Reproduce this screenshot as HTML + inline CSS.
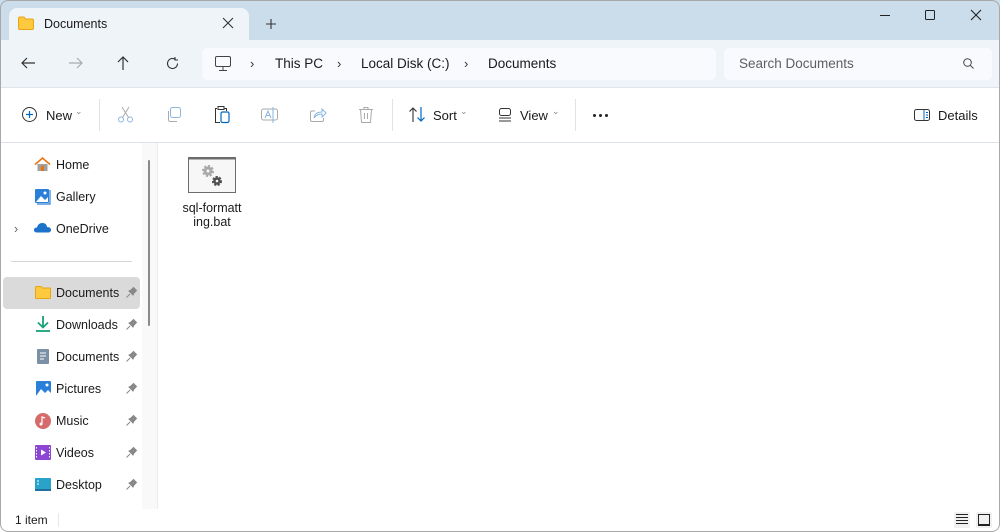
<!DOCTYPE html>
<html><head><style>
*{margin:0;padding:0;box-sizing:border-box}
body{width:1000px;height:532px;overflow:hidden;background:#fff;font-family:"Liberation Sans",sans-serif;font-size:12.5px;color:#1a1a1a;position:relative}
.a{position:absolute}
.frame{position:absolute;inset:0;border:1px solid #a8a8a8;border-radius:8px;pointer-events:none}
.t{position:absolute;white-space:nowrap}
.s{margin-top:1px}
svg{position:absolute;overflow:visible}
</style></head><body>
<div class="a" style="left:0;top:0;width:1000px;height:40px;background:#cbdcea"></div>
<div class="a" style="left:9px;top:8px;width:240px;height:34px;background:#eff4f9;border-radius:8px 8px 0 0"></div>
<div class="a" style="left:0;top:40px;width:1000px;height:48px;background:#eff4f9;border-bottom:1px solid #dfe5ea"></div>
<svg style="left:18px;top:16px" width="16" height="14"><path d="M0.5 2.5 Q0.5 1 2 1 H6 L7.5 3 H14 Q15.5 3 15.5 4.5 V12 Q15.5 13.5 14 13.5 H2 Q0.5 13.5 0.5 12 Z" fill="#fcc93f" stroke="#e9a412"/></svg>
<div class="t" style="left:44px;top:17px;font-size:12.5px">Documents</div>
<svg style="left:223px;top:18px" width="10" height="10"><path d="M0 0L10 10M10 0L0 10" stroke="#333" stroke-width="1.1"/></svg>
<svg style="left:266px;top:19px" width="10" height="10"><path d="M5 0V10M0 5H10" stroke="#333" stroke-width="1.1"/></svg>
<svg style="left:880px;top:15px" width="10" height="1"><path d="M0 0.5H10" stroke="#222"/></svg>
<svg style="left:925px;top:10px" width="10" height="10"><rect x="0.5" y="0.5" width="9" height="9" rx="1" fill="none" stroke="#222"/></svg>
<svg style="left:971px;top:10px" width="10" height="10"><path d="M0 0L10 10M10 0L0 10" stroke="#222" stroke-width="1.1"/></svg>
<svg style="left:21px;top:57px" width="14" height="12"><path d="M14 6H1M6 1L1 6L6 11" fill="none" stroke="#333" stroke-width="1.2"/></svg>
<svg style="left:69px;top:57px" width="14" height="12"><path d="M0 6H13M8 1L13 6L8 11" fill="none" stroke="#aaa" stroke-width="1.2"/></svg>
<svg style="left:117px;top:56px" width="12" height="14"><path d="M6 14V1M1 6L6 1L11 6" fill="none" stroke="#333" stroke-width="1.2"/></svg>
<svg style="left:166px;top:57px" width="13" height="13"><path d="M11.5 6.5A5 5 0 1 1 9.5 2.5M9 0V3H12" fill="none" stroke="#333" stroke-width="1.1"/></svg>
<div class="a" style="left:202px;top:48px;width:514px;height:32px;background:#f8fafd;border-radius:5px"></div>
<svg style="left:215px;top:56px" width="16" height="15"><rect x="0.5" y="0.5" width="15" height="10" rx="1.5" fill="none" stroke="#444"/><path d="M8 11V14M4 14.5H12" stroke="#444"/></svg>
<div class="t" style="left:250px;top:56px;font-size:13px;color:#333">›</div>
<div class="t" style="left:275px;top:56px;font-size:13.5px">This PC</div>
<div class="t" style="left:337px;top:56px;font-size:13px;color:#333">›</div>
<div class="t" style="left:361px;top:56px;font-size:13.5px">Local Disk (C:)</div>
<div class="t" style="left:464px;top:56px;font-size:13px;color:#333">›</div>
<div class="t" style="left:488px;top:56px;font-size:13.5px">Documents</div>
<div class="a" style="left:724px;top:48px;width:268px;height:32px;background:#f8fafd;border-radius:5px"></div>
<div class="t" style="left:739px;top:56px;font-size:13.5px;color:#5f5f5f">Search Documents</div>
<svg style="left:963px;top:58px" width="11" height="11"><circle cx="4.5" cy="4.5" r="3.8" fill="none" stroke="#444"/><path d="M7.3 7.3L10.5 10.5" stroke="#444"/></svg>
<div class="a" style="left:0;top:142px;width:1000px;height:1px;background:#dde3e8"></div>
<svg style="left:22px;top:107px" width="15" height="15"><circle cx="7.5" cy="7.5" r="7" fill="none" stroke="#333"/><path d="M7.5 4V11M4 7.5H11" stroke="#0067c0" stroke-width="1.2"/></svg>
<div class="t" style="left:46px;top:108px;font-size:13px">New</div>
<div class="t" style="left:75px;top:106px;font-size:9px;color:#888">⌄</div>
<div class="a" style="left:99px;top:99px;width:1px;height:32px;background:#e3e3e3"></div>
<svg style="left:118px;top:107px" width="15" height="16"><circle cx="3" cy="12.5" r="2.5" fill="none" stroke="#8ab6e2"/><circle cx="12" cy="12.5" r="2.5" fill="none" stroke="#8ab6e2"/><path d="M4.5 10.5L11 0M10.5 10.5L4 0" stroke="#aaa"/></svg>
<svg style="left:166px;top:107px" width="15" height="15"><rect x="4.5" y="0.5" width="10" height="10" rx="2" fill="none" stroke="#8ab6e2"/><path d="M2.5 4V12.5Q2.5 14.5 4.5 14.5H11" fill="none" stroke="#aaa"/></svg>
<svg style="left:214px;top:106px" width="16" height="17"><path d="M3 2.5H1.5V16.5H6" fill="none" stroke="#333"/><rect x="4" y="0.5" width="6" height="3" fill="none" stroke="#333"/><path d="M10 2.5H12.5V5" fill="none" stroke="#333"/><rect x="7" y="6" width="8" height="10.5" rx="1.5" fill="none" stroke="#0067c0" stroke-width="1.2"/></svg>
<svg style="left:261px;top:107px" width="17" height="16"><rect x="0.5" y="2" width="16" height="11" rx="2" fill="none" stroke="#aaa"/><path d="M4 11L7 4L10 11M5 8.5H9" fill="none" stroke="#8ab6e2"/><path d="M12 0V16" stroke="#8ab6e2"/></svg>
<svg style="left:310px;top:107px" width="16" height="15"><path d="M5 4H2Q0.5 4 0.5 5.5V13Q0.5 14.5 2 14.5H12Q13.5 14.5 13.5 13V11" fill="none" stroke="#aaa"/><path d="M4 11Q5 5 12 5V2L16 6L12 10V7Q7 7 4 11Z" fill="none" stroke="#8ab6e2"/></svg>
<svg style="left:359px;top:107px" width="14" height="16"><path d="M0 2.5H14M5 2.5V0.5H9V2.5M1.5 2.5L2.5 15.5H11.5L12.5 2.5M5.5 6V12M8.5 6V12" fill="none" stroke="#aaa"/></svg>
<div class="a" style="left:392px;top:99px;width:1px;height:32px;background:#e3e3e3"></div>
<svg style="left:409px;top:107px" width="16" height="15"><path d="M4 15V1M0.5 4.5L4 1L7.5 4.5" fill="none" stroke="#333" stroke-width="1.1"/><path d="M12 0V14M8.5 10.5L12 14L15.5 10.5" fill="none" stroke="#0067c0" stroke-width="1.2"/></svg>
<div class="t" style="left:433px;top:108px;font-size:13px">Sort</div>
<div class="t" style="left:460px;top:106px;font-size:9px;color:#888">⌄</div>
<svg style="left:499px;top:108px" width="12" height="14"><rect x="0.5" y="0.5" width="11" height="7" rx="2" fill="none" stroke="#333"/><path d="M0 10H12M0 13H12" stroke="#333"/></svg>
<div class="t" style="left:520px;top:108px;font-size:13px">View</div>
<div class="t" style="left:552px;top:106px;font-size:9px;color:#888">⌄</div>
<div class="a" style="left:575px;top:99px;width:1px;height:32px;background:#e3e3e3"></div>
<div class="a" style="left:593px;top:114px;width:3px;height:3px;background:#222;border-radius:50%"></div>
<div class="a" style="left:599px;top:114px;width:3px;height:3px;background:#222;border-radius:50%"></div>
<div class="a" style="left:605px;top:114px;width:3px;height:3px;background:#222;border-radius:50%"></div>
<svg style="left:914px;top:109px" width="16" height="12"><rect x="0.5" y="0.5" width="15" height="11" rx="2" fill="none" stroke="#333"/><path d="M10 0.5V11.5" stroke="#0067c0"/><path d="M12 3.5H14M12 6H14M12 8.5H14" stroke="#0067c0"/></svg>
<div class="t" style="left:938px;top:108px;font-size:13px">Details</div>
<div class="a" style="left:142px;top:143px;width:15px;height:366px;background:#f9f9f9"></div>
<div class="a" style="left:148px;top:160px;width:2px;height:166px;background:#8a8a8a;border-radius:1px"></div>
<div class="a" style="left:157px;top:143px;width:1px;height:366px;background:#ececec"></div>
<svg style="left:34px;top:157px" width="17" height="15"><path d="M1 7.5L8.5 1L16 7.5" fill="none" stroke="#e8750f" stroke-width="1.6"/><path d="M3.5 7V14H13.5V7" fill="#a0a0a0"/><rect x="7" y="9" width="3" height="5" fill="#e8750f"/></svg>
<div class="t s" style="left:56px;top:157px">Home</div>
<svg style="left:35px;top:188px" width="16" height="16"><rect x="0" y="1" width="14" height="14" rx="1" fill="#2a7fd8"/><path d="M1 14L6 8L10 12L13 9V14Z" fill="#fff"/><circle cx="10" cy="5" r="1.5" fill="#fff"/><path d="M15 2V16H2" fill="none" stroke="#2a7fd8" stroke-width="1.2"/></svg>
<div class="t s" style="left:56px;top:189px">Gallery</div>
<div class="t s" style="left:14px;top:221px;color:#666">›</div>
<svg style="left:34px;top:222px" width="17" height="11"><path d="M3 10.5Q0 10.5 0 8Q0 5.5 3 5.5Q4 1 8.5 1Q12.5 1 13 5Q17 5 17 8Q17 10.5 14 10.5Z" fill="#1d72c9"/></svg>
<div class="t s" style="left:56px;top:221px">OneDrive</div>
<div class="a" style="left:11px;top:261px;width:121px;height:1px;background:#d8d8d8"></div>
<div class="a" style="left:3px;top:277px;width:137px;height:32px;background:#dadada;border-radius:4px"></div>
<svg style="left:35px;top:286px" width="16" height="13"><path d="M0.5 1.5Q0.5 0.5 1.5 0.5H6L7.5 2H15Q15.5 2 15.5 3V12Q15.5 12.5 15 12.5H1Q0.5 12.5 0.5 12Z" fill="#fcc93f" stroke="#e9a412"/></svg>
<div class="t s" style="left:56px;top:285px">Documents</div>
<div class="t s" style="left:56px;top:317px">Downloads</div>
<svg style="left:36px;top:316px" width="14" height="16"><path d="M7 0V11M2 6.5L7 11.5L12 6.5" fill="none" stroke="#1aa179" stroke-width="1.8"/><path d="M0 15H14" stroke="#1aa179" stroke-width="1.8"/></svg>
<svg style="left:37px;top:349px" width="12" height="15"><rect width="12" height="15" rx="1" fill="#7b8fa6"/><path d="M3 4H9M3 7H9M3 10H7" stroke="#fff"/></svg>
<div class="t s" style="left:56px;top:349px">Documents</div>
<svg style="left:36px;top:381px" width="15" height="15"><rect width="15" height="15" rx="1" fill="#2a7fd8"/><path d="M0 15L5 8L9 12L12 9L15 12V15Z" fill="#fff"/><circle cx="11" cy="4" r="1.5" fill="#fff"/></svg>
<div class="t s" style="left:56px;top:381px">Pictures</div>
<svg style="left:35px;top:413px" width="16" height="16"><circle cx="8" cy="8" r="8" fill="#d66b6b"/><path d="M7 11V4L10 5" fill="none" stroke="#fff" stroke-width="1.2"/><circle cx="6" cy="11" r="1.5" fill="#fff"/></svg>
<div class="t s" style="left:56px;top:413px">Music</div>
<svg style="left:35px;top:445px" width="16" height="15"><rect width="16" height="15" rx="1" fill="#8d46d4"/><path d="M6 4.5L11 7.5L6 10.5Z" fill="#fff"/><path d="M1.5 2V13M14.5 2V13" stroke="#fff" stroke-dasharray="1.5 1.5"/></svg>
<div class="t s" style="left:56px;top:445px">Videos</div>
<svg style="left:35px;top:478px" width="16" height="13"><rect width="16" height="12" rx="1" fill="#29a3c9"/><rect x="0" y="11" width="16" height="2" fill="#1e6f9c"/><path d="M2 3H4M2 6H4" stroke="#fff"/></svg>
<div class="t s" style="left:56px;top:477px">Desktop</div>
<svg style="left:126px;top:287px" width="11" height="11"><path d="M0.5 10.5L4 7M3 4L7 8L8 6L10.5 3.5L7.5 0.5L5 3Z" fill="#888" stroke="#888"/></svg>
<svg style="left:126px;top:319px" width="11" height="11"><path d="M0.5 10.5L4 7M3 4L7 8L8 6L10.5 3.5L7.5 0.5L5 3Z" fill="#888" stroke="#888"/></svg>
<svg style="left:126px;top:351px" width="11" height="11"><path d="M0.5 10.5L4 7M3 4L7 8L8 6L10.5 3.5L7.5 0.5L5 3Z" fill="#888" stroke="#888"/></svg>
<svg style="left:126px;top:383px" width="11" height="11"><path d="M0.5 10.5L4 7M3 4L7 8L8 6L10.5 3.5L7.5 0.5L5 3Z" fill="#888" stroke="#888"/></svg>
<svg style="left:126px;top:415px" width="11" height="11"><path d="M0.5 10.5L4 7M3 4L7 8L8 6L10.5 3.5L7.5 0.5L5 3Z" fill="#888" stroke="#888"/></svg>
<svg style="left:126px;top:447px" width="11" height="11"><path d="M0.5 10.5L4 7M3 4L7 8L8 6L10.5 3.5L7.5 0.5L5 3Z" fill="#888" stroke="#888"/></svg>
<svg style="left:126px;top:479px" width="11" height="11"><path d="M0.5 10.5L4 7M3 4L7 8L8 6L10.5 3.5L7.5 0.5L5 3Z" fill="#888" stroke="#888"/></svg>
<svg style="left:188px;top:157px" width="48" height="36"><rect x="0.5" y="0.5" width="47" height="35" fill="#f7f7f7" stroke="#6c6c6c"/><rect x="0.5" y="0.5" width="47" height="2" fill="#6c6c6c"/><circle cx="20" cy="14" r="4.5" fill="#a9a9a9" stroke="#a9a9a9" stroke-width="3" stroke-dasharray="2 1.5"/><circle cx="20" cy="14" r="1.5" fill="#f7f7f7"/><circle cx="29" cy="24" r="3.8" fill="#505050" stroke="#505050" stroke-width="2.5" stroke-dasharray="2 1.3"/><circle cx="29" cy="24" r="1.3" fill="#f7f7f7"/></svg>
<div class="t" style="left:168px;top:201px;width:88px;text-align:center;line-height:14px">sql-formatt<br>ing.bat</div>
<div class="t" style="left:15px;top:513px;font-size:12px">1 item</div>
<div class="a" style="left:58px;top:513px;width:1px;height:14px;background:#e6e6e6"></div>
<div class="a" style="left:954px;top:512px;width:16px;height:16px;background:#f0f0f0;border-radius:2px"></div>
<svg style="left:956px;top:514px" width="12" height="11"><path d="M0 0.5H12M0 3.5H12M0 6.5H12M0 9.5H12" stroke="#222"/></svg>
<div class="a" style="left:976px;top:512px;width:16px;height:16px;background:#f0f0f0;border-radius:2px"></div>
<svg style="left:978px;top:514px" width="12" height="12"><rect x="0.5" y="0.5" width="11" height="10" fill="none" stroke="#222"/><path d="M0 11.5H12" stroke="#222"/></svg>
<div class="frame"></div>
</body></html>
